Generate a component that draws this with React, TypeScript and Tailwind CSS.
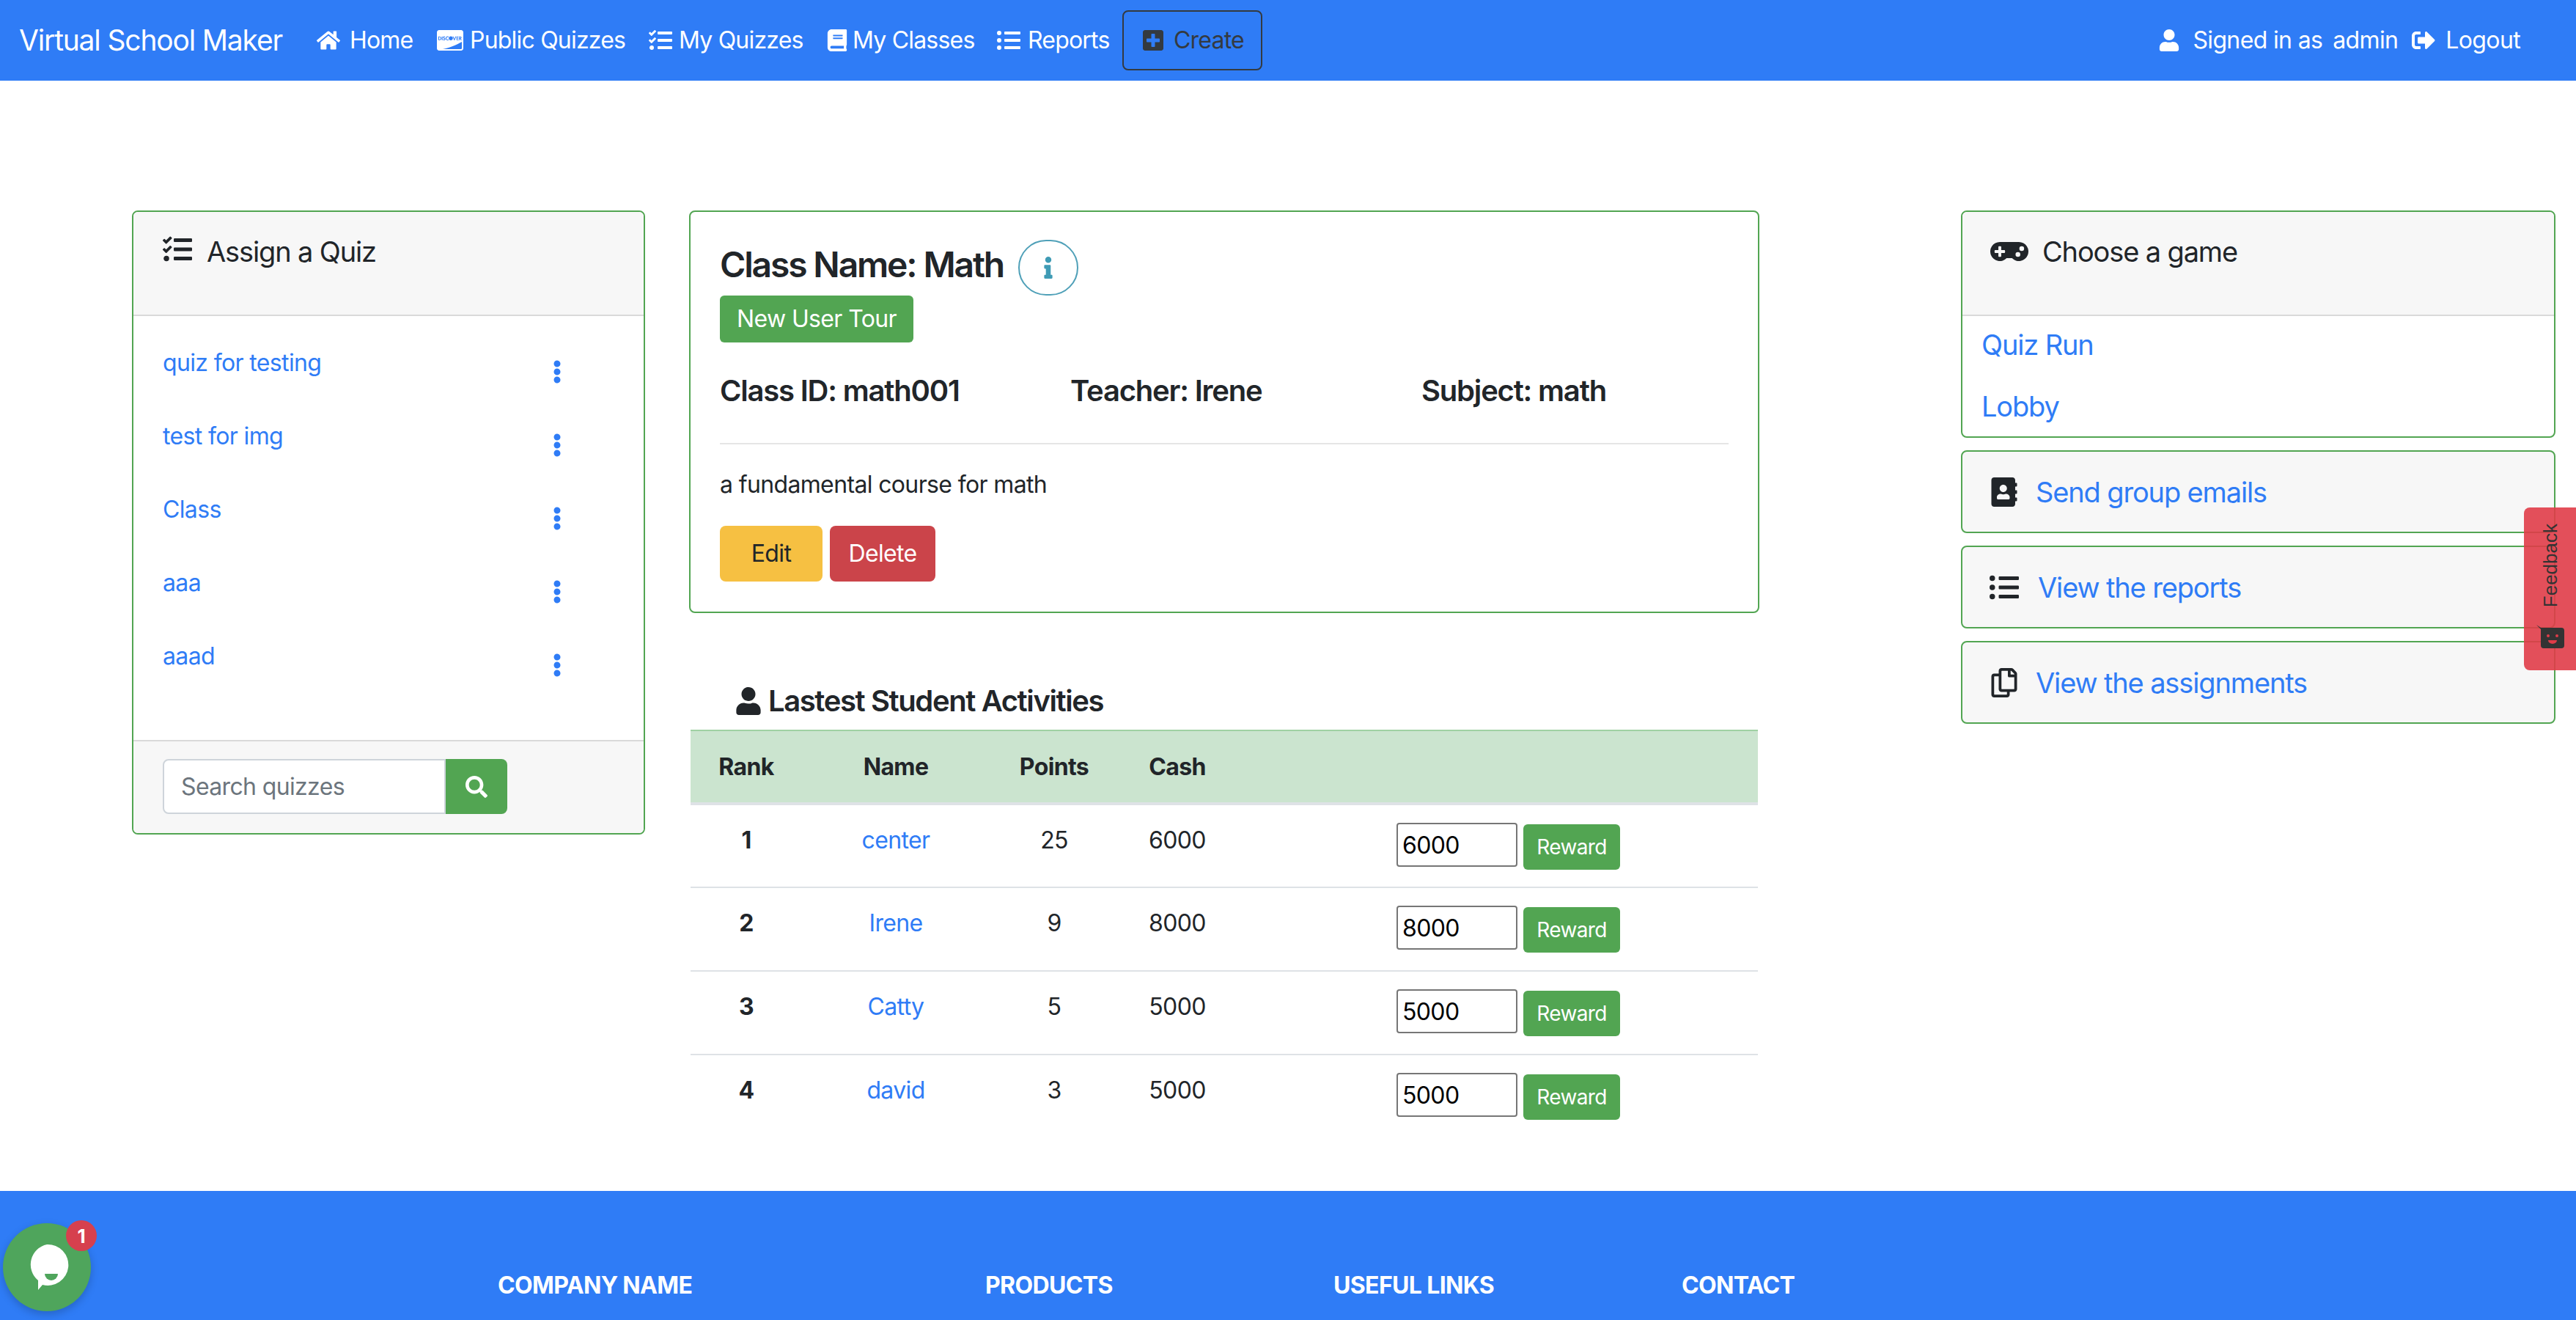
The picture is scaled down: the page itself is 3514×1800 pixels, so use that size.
import {
  FaAddressBook,
  FaBook,
  FaCcDiscover,
  FaEllipsisV,
  FaGamepad,
  FaHome,
  FaInfo,
  FaListUl,
  FaPlusSquare,
  FaRegCopy,
  FaSearch,
  FaSignOutAlt,
  FaTasks,
  FaUser,
} from 'react-icons/fa';

const quizzes = ['quiz for testing', 'test for img', 'Class', 'aaa', 'aaad'];

const students = [
  { rank: 1, name: 'center', points: 25, cash: 6000 },
  { rank: 2, name: 'Irene', points: 9, cash: 8000 },
  { rank: 3, name: 'Catty', points: 5, cash: 5000 },
  { rank: 4, name: 'david', points: 3, cash: 5000 },
];

function NavBar() {
  return (
    <nav className="h-[110px] shrink-0 bg-[#2f7cf6] flex items-center text-white text-[32px] tracking-[-0.025em]">
      <a href="#" className="w-[432px] pl-[26px] text-[39px] tracking-[-0.03em] whitespace-nowrap">Virtual School Maker</a>
      <a href="#" className="w-[164px] flex items-center gap-[13px]"><FaHome size={32} />Home</a>
      <a href="#" className="w-[289px] flex items-center gap-[9px]"><FaCcDiscover size={36} />Public Quizzes</a>
      <a href="#" className="w-[242px] flex items-center gap-[9px]"><FaTasks size={32} />My Quizzes</a>
      <a href="#" className="w-[233px] flex items-center gap-[6px]"><FaBook size={30} />My Classes</a>
      <a href="#" className="w-[171px] flex items-center gap-[10px]"><FaListUl size={32} />Reports</a>
      <button className="w-[191px] h-[82px] border-2 border-[#343a40] rounded-[8px] text-[#343a40] flex items-center gap-[12px] pl-[24px]">
        <FaPlusSquare size={32} />Create
      </button>
      <div className="flex items-center ml-auto pr-[76px] tracking-[-0.02em]">
        <FaUser size={30} />
        <span className="ml-[17px]">Signed in as</span>
        <span className="ml-[14px]">admin</span>
        <FaSignOutAlt size={32} className="ml-[19px]" />
        <a href="#" className="ml-[14px]">Logout</a>
      </div>
    </nav>
  );
}

function QuizCard() {
  return (
    <div className="w-[700px] h-[851px] shrink-0 border-2 border-[#52a552] rounded-[8px] flex flex-col overflow-hidden">
      <div className="h-[142px] shrink-0 bg-[#f7f7f7] border-b-2 border-[#d9d9d9] pl-[40px] pt-[30px] flex items-start gap-[20px] text-[38px] leading-[48px] text-[#212529]">
        <FaTasks size={40} className="mt-[1px]" />
        <span className="tracking-[-0.03em]">Assign a Quiz</span>
      </div>
      <ul className="flex-1 pt-[40px] pl-[40px]">
        {quizzes.map((quiz) => (
          <li key={quiz} className="h-[100px] flex items-start">
            <a href="#" className="w-[526px] text-[32px] leading-[48px] tracking-[-0.02em] text-[#2f7cf6]">{quiz}</a>
            <span className="h-[48px] mt-[12px] w-[24px] flex items-center justify-center text-[#2f7cf6]"><FaEllipsisV size={32} /></span>
          </li>
        ))}
      </ul>
      <div className="h-[127px] shrink-0 bg-[#f7f7f7] border-t-2 border-[#d9d9d9] pl-[40px] pt-[24px] flex items-start">
        <input
          placeholder="Search quizzes"
          className="w-[386px] h-[75px] bg-white border-2 border-[#ced4da] rounded-l-[8px] pl-[23px] text-[32px] tracking-[-0.02em] placeholder:text-[#6c757d] outline-none"
        />
        <button className="w-[84px] h-[75px] bg-[#52a552] rounded-r-[8px] text-white flex items-center justify-center"><FaSearch size={30} /></button>
      </div>
    </div>
  );
}

function ClassCard() {
  return (
    <div className="h-[549px] border-2 border-[#52a552] rounded-[8px] pl-[40px] pr-[40px] pt-[38px] text-[#212529]">
      <div className="flex items-center h-[76px]">
        <h3 className="text-[48px] leading-[56px] font-semibold tracking-[-0.045em] -mt-[8px]">Class Name: Math</h3>
        <button className="ml-[20px] w-[82px] h-[76px] rounded-full border-2 border-[#4fa0b8] text-[#3f9bb5] flex items-center justify-center"><FaInfo size={30} /></button>
      </div>
      <button className="block w-[264px] h-[64px] bg-[#52a552] rounded-[6px] text-white text-[32px] tracking-[-0.02em]">New User Tour</button>
      <div className="flex mt-[41px] text-[40px] leading-[50px] font-semibold tracking-[-0.03em]">
        <h5 className="w-[478px]">Class ID: math001</h5>
        <h5 className="w-[479px]">Teacher: Irene</h5>
        <h5>Subject: math</h5>
      </div>
      <hr className="mt-[46px] border-t-2 border-[#e5e5e5]" />
      <p className="mt-[31px] text-[32px] leading-[48px] tracking-[-0.02em]">a fundamental course for math</p>
      <div className="flex gap-[10px] mt-[32px]">
        <button className="w-[140px] h-[76px] bg-[#f6c042] rounded-[8px] text-[#212529] text-[32px] tracking-[-0.02em]">Edit</button>
        <button className="w-[144px] h-[76px] bg-[#cb444a] rounded-[8px] text-white text-[32px] tracking-[-0.02em]">Delete</button>
      </div>
    </div>
  );
}

function ActivityTable() {
  return (
    <div>
      <h5 className="mt-[95px] h-[50px] pl-[62px] flex items-center gap-[8px] text-[40px] leading-[50px] font-semibold tracking-[-0.035em] text-[#212529]">
        <FaUser size={38} />Lastest Student Activities
      </h5>
      <div className="mt-[14px] px-[2px]">
        <table className="w-full table-fixed text-[32px] tracking-[-0.02em] text-[#212529]">
          <colgroup>
            <col className="w-[152px]" />
            <col className="w-[256px]" />
            <col className="w-[176px]" />
            <col className="w-[160px]" />
            <col />
          </colgroup>
          <thead>
            <tr className="h-[100px] bg-[#cbe4cf] border-t-2 border-b-4 border-t-[#9fd1a3] border-b-[#dee2e6]">
              <th className="text-center font-bold">Rank</th>
              <th className="text-center font-bold">Name</th>
              <th className="text-center font-bold">Points</th>
              <th className="text-center font-bold">Cash</th>
              <th />
            </tr>
          </thead>
          <tbody>
            {students.map((s, i) => (
              <tr key={s.name} className={i < 3 ? 'h-[114px] border-b-2 border-[#dee2e6]' : 'h-[114px]'}>
                <td className="text-center font-bold align-top pt-[24px] leading-[48px]">{s.rank}</td>
                <td className="text-center align-top pt-[24px] leading-[48px]"><a href="#" className="text-[#2f7cf6]">{s.name}</a></td>
                <td className="text-center align-top pt-[24px] leading-[48px]">{s.points}</td>
                <td className="text-center align-top pt-[24px] leading-[48px]">{s.cash}</td>
                <td className="align-top pt-[24px] pl-[219px]">
                  <div className="flex items-start gap-[8px]">
                    <input
                      defaultValue={s.cash}
                      className="w-[165px] h-[60px] border-2 border-[#767676] rounded-[4px] px-[6px] text-[32px] text-black outline-none"
                    />
                    <button className="w-[132px] h-[62px] mt-[2px] bg-[#52a552] rounded-[6px] text-white text-[28px]">Reward</button>
                  </div>
                </td>
              </tr>
            ))}
          </tbody>
        </table>
      </div>
    </div>
  );
}

function SideCards() {
  return (
    <div className="w-[811px] shrink-0 flex flex-col gap-[17px] text-[38px] leading-[48px] tracking-[-0.03em]">
      <div className="h-[310px] border-2 border-[#52a552] rounded-[8px] overflow-hidden">
        <div className="h-[142px] bg-[#f7f7f7] border-b-2 border-[#d9d9d9] pl-[38px] pt-[30px] flex items-start gap-[19px] text-[#212529]">
          <FaGamepad size={52} className="-mt-[2px]" />
          <span>Choose a game</span>
        </div>
        <div className="pl-[26px] pt-[15px] flex flex-col gap-[36px] text-[#2f7cf6]">
          <a href="#">Quiz Run</a>
          <a href="#">Lobby</a>
        </div>
      </div>
      <div className="h-[113px] bg-[#f7f7f7] border-2 border-[#52a552] rounded-[8px] pl-[37px] flex items-center gap-[23px]">
        <FaAddressBook size={40} className="text-[#212529]" />
        <a href="#" className="text-[#2f7cf6]">Send group emails</a>
      </div>
      <div className="h-[113px] bg-[#f7f7f7] border-2 border-[#52a552] rounded-[8px] pl-[37px] flex items-center gap-[26px]">
        <FaListUl size={40} className="text-[#212529]" />
        <a href="#" className="text-[#2f7cf6]">View the reports</a>
      </div>
      <div className="h-[113px] bg-[#f7f7f7] border-2 border-[#52a552] rounded-[8px] pl-[37px] flex items-center gap-[23px]">
        <FaRegCopy size={40} className="text-[#212529]" />
        <a href="#" className="text-[#2f7cf6]">View the assignments</a>
      </div>
    </div>
  );
}

function FeedbackTab() {
  return (
    <div className="absolute right-0 top-[692px] w-[71px] h-[222px] bg-[#e03c48]/90 rounded-l-[8px] flex flex-col items-center pt-[22px]">
      <span className="[writing-mode:vertical-rl] rotate-180 text-[26px] leading-[32px] text-[#333] font-['Liberation_Sans',sans-serif]">Feedback</span>
      <svg viewBox="0 0 38 32" className="w-[38px] h-[32px] mt-[24px]">
        <path d="M0 0 L6 4 H34 a4 4 0 0 1 4 4 V28 a4 4 0 0 1 -4 4 H10 a4 4 0 0 1 -4 -4 V6 Z" fill="#333" />
        <circle cx="16" cy="15" r="2" fill="#e03c48" />
        <circle cx="28" cy="15" r="2" fill="#e03c48" />
        <path d="M16 21 a6 5 0 0 0 12 0 Z" fill="#e03c48" />
      </svg>
    </div>
  );
}

function ChatBubble() {
  return (
    <div className="absolute left-[4px] bottom-[12px] w-[120px] h-[120px] rounded-full bg-[#4fa55c] shadow-[0_4px_12px_rgba(0,0,0,0.2)] flex items-center justify-center">
      <svg viewBox="0 0 60 66" className="w-[60px] h-[66px]">
        <path d="M30 2 a28 28 0 1 1 -6 55 L18 64 L18 51 A28 28 0 0 1 30 2 Z" fill="#fff" />
        <path d="M27 42 H45 a9 9 0 0 1 -18 0 Z" fill="#4fa55c" />
      </svg>
      <span className="absolute -top-[4px] -right-[8px] w-[42px] h-[42px] rounded-full bg-[#d6404e] text-white text-[26px] font-bold flex items-center justify-center">1</span>
    </div>
  );
}

function Footer() {
  return (
    <footer className="h-[176px] shrink-0 bg-[#2f7cf6] pt-[110px] pl-[679px] flex items-start text-white text-[32px] leading-[38px] font-bold tracking-[-0.02em]">
      <h6 className="w-[665px]">COMPANY NAME</h6>
      <h6 className="w-[475px]">PRODUCTS</h6>
      <h6 className="w-[475px]">USEFUL LINKS</h6>
      <h6>CONTACT</h6>
    </footer>
  );
}

export default function App() {
  return (
    <div className="relative h-[1800px] overflow-hidden flex flex-col bg-white font-['Inter',sans-serif]">
      <NavBar />
      <main className="flex-1 pt-[177px] pl-[180px] flex items-start">
        <QuizCard />
        <div className="w-[1460px] shrink-0 ml-[60px]">
          <ClassCard />
          <ActivityTable />
        </div>
        <div className="ml-[275px]">
          <SideCards />
        </div>
      </main>
      <Footer />
      <FeedbackTab />
      <ChatBubble />
    </div>
  );
}
